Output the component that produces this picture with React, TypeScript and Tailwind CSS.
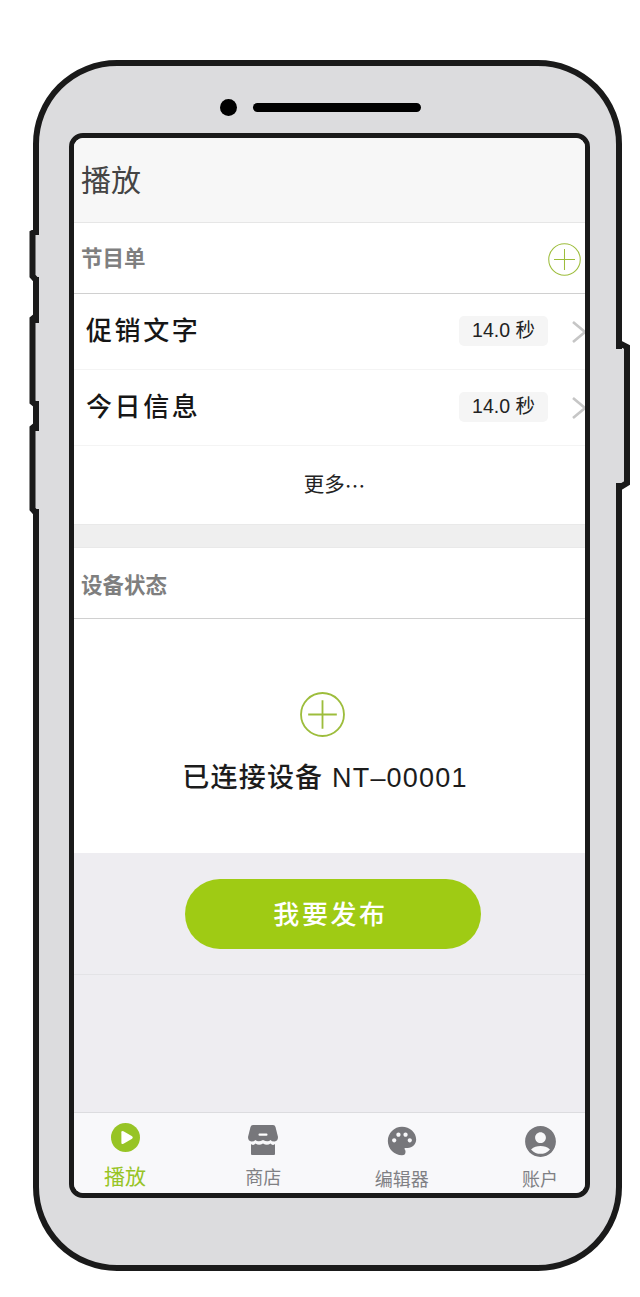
import type { ReactNode } from 'react';
import { MdAccountCircle, MdPalette } from 'react-icons/md';

const cjk = "font-['Liberation_Sans','Noto_Sans_CJK_SC',sans-serif]";

function PlusCircle({ className, weight }: { className: string; weight: number }) {
  return (
    <svg viewBox="0 0 44 44" fill="none" stroke="#9dbd3c" strokeWidth={weight} className={className}>
      <circle cx="22" cy="22" r="21" />
      <path d="M8 22H36M22 8V36" />
    </svg>
  );
}

function PlayIcon() {
  return (
    <svg viewBox="0 0 28 28" className="h-[29px] w-[29px]">
      <circle cx="14" cy="14" r="14" fill="#97c425" />
      <path d="M10 9Q10 7 12 8L20 12.6Q22 14 20 15.4L12 20Q10 21 10 19Z" fill="#fff" />
    </svg>
  );
}

function StoreIcon() {
  return (
    <svg viewBox="0 0 30 30" className="h-[30px] w-[30px]" fill="#77777b">
      <path d="M5 0H25Q27 0 27.5 2L30 12Q30 16 26.5 16.5Q23.5 16.5 22.5 15Q20 17.5 15 15Q10 17.5 7.5 15Q6 16.5 3.5 16.5Q0 16 0 12L2.5 2Q3 0 5 0Z" />
      <path d="M3 19Q5.5 21 7.5 18.5Q11 21 15 18.5Q19 21 22.5 18.5Q24.5 21 27 19V29Q27 30 26 30H4Q3 30 3 29Z" />
      <rect x="10.5" y="8.5" width="9" height="2.2" rx="1" fill="#fff" />
    </svg>
  );
}

function Tab({ icon, label, labelClass }: { icon: ReactNode; label: string; labelClass: string }) {
  return (
    <div className="flex h-full w-[70px] flex-col items-center">
      {icon}
      <span className={`whitespace-nowrap leading-none ${labelClass}`}>{label}</span>
    </div>
  );
}

function SectionHeader({ title, titleClass, children }: { title: string; titleClass: string; children?: ReactNode }) {
  return (
    <div className="flex h-[71px] items-center justify-between border-b border-[#d0d0d0] bg-white pl-[7px] pr-[4px]">
      <span className={`text-[21.5px] font-bold text-[#7f7f7f] ${titleClass}`}>{title}</span>
      {children}
    </div>
  );
}

function ProgramRow({ title }: { title: string }) {
  return (
    <div className="flex h-[76px] items-center border-b border-[#f4f4f4] bg-white pb-[2px] pl-[12px]">
      <span className="pt-[2px] text-[26px] font-medium tracking-[2.6px] text-[#161616]">{title}</span>
      <span className="ml-auto flex h-[30px] w-[89px] items-center justify-center rounded-[5px] bg-[#f5f5f5] text-[19.5px] text-[#222]">
        14.0 秒
      </span>
      <svg viewBox="0 0 13 22" fill="none" stroke="#c6c6c6" strokeWidth="2.6" className="ml-[24px] mt-[3px] h-[22px] w-[13px] shrink-0">
        <path d="M1 1L13 11L1 21" />
      </svg>
    </div>
  );
}

export default function App() {
  return (
    <div className={`relative h-[1297px] w-[640px] overflow-hidden bg-white pl-[33px] pt-[60px] ${cjk}`}>
      <div className="relative h-[1211px] w-[589px] rounded-[84px] border-[6px] border-[#1a1a1a] bg-[#dcdcde] pl-[30px] pr-[26px]">
        {/* side buttons */}
        <svg viewBox="0 0 640 1297" className="pointer-events-none absolute left-[-39px] top-[-66px] h-[1297px] w-[640px]" fill="none">
          <g fill="#dcdcde">
            <rect x="35" y="235" width="6" height="42" />
            <rect x="35" y="323" width="6" height="78" />
            <rect x="35" y="431" width="6" height="78" />
            <rect x="615" y="349" width="9" height="134" />
          </g>
          <path
            d="M36 226V231L32.5 233V276L36 280V316L32.5 319V402L36 405V425L32.5 428V509L36 513V520M619 338V343L627 347V483L619 488V494"
            stroke="#1a1a1a"
            strokeWidth="6"
          />
        </svg>

        <div className="flex h-[67px] items-center pl-[151px] pt-[16px]">
          <span className="h-[17px] w-[17px] rounded-full bg-black" />
          <span className="ml-[16px] h-[9px] w-[168px] rounded-full bg-black" />
        </div>

        <div className="flex h-[1065px] w-[521px] flex-col overflow-hidden rounded-[14px] border-[5px] border-[#1a1a1a] bg-[#eeedf1]">
          <div className="flex h-[85px] items-center border-b border-[#e6e6e6] bg-[#f7f7f7] pl-[7px] pt-[2px]">
            <span className="text-[30px] leading-none text-[#444]">播放</span>
          </div>

          <SectionHeader title="节目单" titleClass="pt-[2px]">
            <PlusCircle weight={1.4} className="mt-[2px] h-[33px] w-[33px]" />
          </SectionHeader>
          <ProgramRow title="促销文字" />
          <ProgramRow title="今日信息" />
          <div className="flex h-[78px] items-center justify-center bg-white pl-[10px] text-[20.5px] text-[#222]">
            更多<span className="font-['Noto_Sans_CJK_SC',sans-serif]" lang="zh-CN">…</span>
          </div>

          <div className="h-[24px] border-y border-[#e9e9e9] bg-[#efefef]" />
          <SectionHeader title="设备状态" titleClass="pt-[7px]" />

          <div className="flex h-[234px] flex-col items-center bg-white">
            <PlusCircle weight={1.8} className="mr-[15px] mt-[73px] h-[45px] w-[45px]" />
            <span className="mr-[9px] mt-[21px] whitespace-nowrap text-[27px] font-medium leading-[40px] tracking-[1.2px] text-[#1c1c1c]">
              已连接设备 NT–00001
            </span>
          </div>

          <div className="h-[122px] border-b border-[#e3e3e6] pl-[111px] pt-[26px]">
            <button className="flex h-[70px] w-[296px] items-center justify-center rounded-full bg-[#9fcb14] pr-[5px] pt-[2px] text-[26px] font-medium tracking-[2.6px] text-white">
              我要发布
            </button>
          </div>

          <div className="flex-1" />

          <div className="flex h-[81px] items-start justify-between border-t border-[#dcdcdf] bg-[#f8f8fa] pl-[16px] pr-[10px]">
            <Tab
              label="播放"
              labelClass="mt-[14px] text-[21px] text-[#97c425]"
              icon={<div className="mt-[10px]"><PlayIcon /></div>}
            />
            <Tab
              label="商店"
              labelClass="mt-[14px] text-[18px] text-[#808084]"
              icon={<div className="mt-[12px]"><StoreIcon /></div>}
            />
            <Tab
              label="编辑器"
              labelClass="mt-[13px] text-[18px] text-[#808084]"
              icon={<MdPalette className="mt-[11px] h-[34px] w-[34px] text-[#77777b]" />}
            />
            <Tab
              label="账户"
              labelClass="mt-[11px] text-[18px] text-[#808084]"
              icon={<MdAccountCircle className="ml-[2px] mt-[10px] h-[37px] w-[37px] text-[#77777b]" />}
            />
          </div>
        </div>
      </div>
    </div>
  );
}
